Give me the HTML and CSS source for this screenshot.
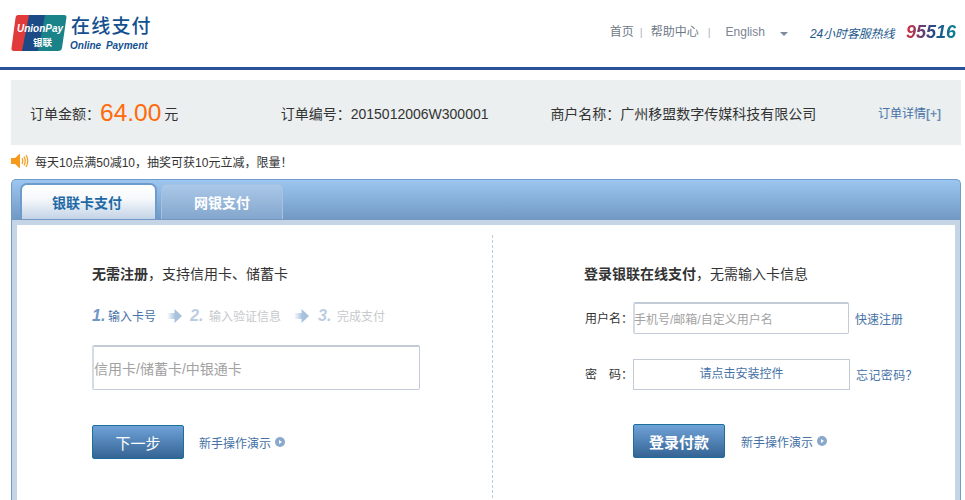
FILE: index.html
```html
<!DOCTYPE html>
<html lang="zh-CN">
<head>
<meta charset="utf-8">
<title>在线支付</title>
<link rel="stylesheet" href="styles.css">
</head>
<body>
<header class="top">
  <div class="brand">
    <svg class="logo" width="56" height="36" viewBox="0 0 56 36">
      <path d="M7 0H22L15 36H3Q0 36 .5 33L4.500 3Q5 0 7 0Z" fill="#e03a3a"/>
      <path d="M18 0H37L30 36H11Z" fill="#1c4a86"/>
      <path d="M34 0H53Q56 0 55.400 3L51 33Q50.500 36 47 36H27Z" fill="#1a8289"/>
      <text x="6" y="17" class="logo-en" textLength="46" lengthAdjust="spacingAndGlyphs">UnionPay</text>
      <text x="22" y="30.500" class="logo-cn">银联</text>
    </svg>
    <div class="brand-text">
      <div class="brand-cn">在线支付</div>
      <div class="brand-en">Online Payment</div>
    </div>
  </div>
  <nav class="nav">
    <a class="nav-link">首页</a><i class="sep sep-a">|</i><a class="nav-link">帮助中心</a><i class="sep sep-b">|</i>
    <a class="nav-lang">English</a><span class="caret"></span>
    <span class="hotline">24小时客服热线</span><span class="phone">95516</span>
  </nav>
</header>

<section class="order">
  <div class="order-amount">订单金额：<b class="amount">64.00</b> 元</div>
  <div class="order-no">订单编号：2015012006W300001</div>
  <div class="order-shop">商户名称：广州移盟数字传媒科技有限公司</div>
  <a class="order-more">订单详情<b>[+]</b></a>
</section>

<p class="notice">
  <svg class="speaker" width="19" height="16" viewBox="0 0 19 16">
    <path d="M0 5H4L9 .5V15.500L4 11H0Z" fill="#f79a1c"/>
    <path d="M11 5Q12.500 8 11 11M13 3.500Q15.500 8 13 12.500M15 2Q18.500 8 15 14" fill="none" stroke="#f2a02a" stroke-width="1.300"/>
  </svg>
  <span>每天10点满50减10，抽奖可获10元立减，限量！</span>
</p>

<main class="panel">
  <div class="tabs">
    <div class="tab tab-on">银联卡支付</div>
    <div class="tab tab-off">网银支付</div>
  </div>
  <div class="frame">
    <div class="cols">
      <section class="col col-left">
        <h2 class="col-title"><b>无需注册</b>，支持信用卡、储蓄卡</h2>
        <ol class="steps">
          <li class="step step-on"><em>1.</em>输入卡号</li>
          <li class="arrow arrow-a"></li>
          <li class="step"><em>2.</em>输入验证信息</li>
          <li class="arrow arrow-b"></li>
          <li class="step"><em>3.</em>完成支付</li>
        </ol>
        <div class="field field-card">信用卡/储蓄卡/中银通卡</div>
        <div class="actions actions-left">
          <button class="btn">下一步</button>
          <a class="demo">新手操作演示<span class="play"></span></a>
        </div>
      </section>
      <section class="col col-right">
        <h2 class="col-title"><b>登录银联在线支付</b>，无需输入卡信息</h2>
        <div class="row row-user">
          <label class="row-label">用户名：</label>
          <div class="field field-user">手机号/邮箱/自定义用户名</div>
          <a class="row-link">快速注册</a>
        </div>
        <div class="row row-pass">
          <label class="row-label">密&emsp;码：</label>
          <div class="field-install">请点击安装控件</div>
          <a class="row-link row-link-wide">忘记密码？</a>
        </div>
        <div class="actions actions-right">
          <button class="btn btn-bold">登录付款</button>
          <a class="demo">新手操作演示<span class="play"></span></a>
        </div>
      </section>
    </div>
  </div>
</main>
</body>
</html>
```
FILE: styles.css
```css
* { box-sizing: border-box; }
html, body { margin: 0; height: 500px; overflow: hidden; background: #fff; }
body {
  font-family: "Liberation Sans", "Noto Sans CJK SC", sans-serif;
  font-size: 12px;
  color: #333;
}
a { color: #4672a6; text-decoration: none; }

.top {
  height: 70px;
  border-bottom: 3px solid #2a5298;
  padding: 15px 9px 0 11px;
  display: flex;
  justify-content: space-between;
  align-items: flex-start;
}
.brand { display: flex; gap: 3px; }
.logo { display: block; }
.logo-en { font: italic bold 10px "Liberation Sans", sans-serif; fill: #fff; }
.logo-cn { font: bold 9.500px "Noto Sans CJK SC", sans-serif; fill: #fff; }
.brand-cn {
  font-size: 19px;
  font-weight: 500;
  line-height: 22px;
  letter-spacing: 1.200px;
  color: #14508f;
  margin: 1px 0 0 1px;
}
.brand-en {
  font: italic bold 10px/12px "Liberation Sans", sans-serif;
  word-spacing: 2px;
  color: #14508f;
  margin-top: 2px;
}
.nav {
  display: flex;
  align-items: center;
  height: 30px;
  margin-top: 2px;
  color: #6f7a87;
}
.nav-link { color: #6f7a87; line-height: 30px; }
.sep { font-style: normal; color: #a9b3bf; font-size: 11px; }
.sep-a { margin: 0 8px 0 6px; }
.sep-b { margin: 0 15px 0 9px; }
.nav-lang { color: #7a8494; }
.caret {
  width: 0;
  height: 0;
  margin: 3px 22px 0 15px;
  border: 4px solid transparent;
  border-top-color: #7f8a99;
  border-bottom: 0;
}
.hotline { font-style: italic; color: #1d5a8c; width: 96px; letter-spacing: -.1px; }
.phone {
  font: italic bold 18px/30px "Liberation Sans", sans-serif;
  background: linear-gradient(90deg, #dc2f3f 0, #6c3b70 30%, #1c4f8a 60%, #0f8293 100%);
  -webkit-background-clip: text;
  background-clip: text;
  color: transparent;
}

.order {
  margin: 10px 4px 0 11px;
  height: 65px;
  background: #ebeff0;
  padding: 0 20px 0 19px;
  display: flex;
  align-items: center;
  font-size: 14px;
  color: #333;
}
.order-amount { width: 251px; display: flex; align-items: center; white-space: pre; }
.amount { font-weight: normal; font-size: 24.500px; color: #ff6a0a; line-height: 30px; margin-right: -1px; }
.order-no { width: 270px; }
.order-shop { width: 328px; }
.order-more { font-size: 12px; white-space: nowrap; }
.order-more b { color: #6f8fb5; font-size: 12px; }

.notice {
  margin: 8px 0 0 11px;
  height: 16px;
  display: flex;
  align-items: center;
  gap: 5px;
  color: #333;
}
.speaker { display: block; }

.panel {
  margin: 10px 4px 0 11px;
  height: 338px;
  background: linear-gradient(#9cc6f0 0, #7098c3 40px, #c5d5e6 40px);
  border: 1px solid #6f9ccb;
  border-bottom: 0;
  border-radius: 5px 5px 0 0;
  padding: 0 5px;
}
.tabs {
  height: 39px;
  display: flex;
  align-items: flex-end;
  gap: 6px;
  padding-left: 5px;
}
.tab {
  height: 35px;
  text-align: center;
  font-size: 14px;
  font-weight: bold;
  line-height: 36px;
  border-radius: 5px 5px 0 0;
}
.tab-on {
  width: 133px;
  height: 34px;
  padding-right: 3px;
  background: linear-gradient(#fff 0, #f7f9fc 40%, #c3d3e6 100%);
  color: #1f6aa5;
  box-shadow: 0 0 0 2px #6d9bcb;
  clip-path: inset(-2px -2px 0 -2px);
}
.tab-off {
  width: 122px;
  background: linear-gradient(#aac8e8, #84a6cd);
  border: 1px solid #a3c1e2;
  border-bottom: 0;
  color: #fff;
}
.frame { margin-top: 6px; height: 298px; background: #fff; padding-top: 10px; }
.cols { display: flex; height: 100%; }
.col { height: 100%; }
.col-left {
  width: 476px;
  padding-left: 75px;
  border-right: 1px dashed #b7cde2;
}
.col-right { flex: 1; padding-left: 91px; }
.col-title {
  margin: 0;
  padding-top: 30px;
  font-size: 14px;
  font-weight: normal;
  line-height: 18px;
  color: #333;
}
.col-title b { font-weight: bold; }

.steps {
  margin: 24px 0 0;
  padding: 0;
  list-style: none;
  display: flex;
  align-items: center;
  height: 18px;
  color: #c6c9cd;
}
.step { display: flex; align-items: baseline; }
.step em {
  width: 19px;
  font: italic bold 16px "Liberation Sans", sans-serif;
  color: #bccde2;
}
.step-on { color: #4672a6; }
.step-on em { width: 16px; color: #6e97c4; }
.arrow {
  width: 15px;
  height: 14px;
  background: linear-gradient(90deg, #fff, #a8c2de 55%);
  clip-path: polygon(0 28%, 50% 28%, 50% 0, 100% 50%, 50% 100%, 50% 72%, 0 72%);
}
.arrow-a { margin: 0 8px 0 11px; }
.arrow-b { margin: 0 9px 0 13px; }

.field {
  border: 1px solid #c3ccd6;
  border-top: 2px solid #c3ccd6;
  border-left: 2px solid #d5dbe2;
  border-radius: 2px;
  color: #a2a2a2;
  background: #fff;
  display: flex;
  align-items: center;
}
.field-card { margin-top: 20px; width: 328px; height: 45px; font-size: 14px; }
.field-user { width: 216px; height: 32px; text-indent: -1px; }
.field-install {
  width: 217px;
  height: 31px;
  border: 1px solid #c3ccd6;
  color: #4672a6;
  line-height: 29px;
  text-align: center;
}

.actions { display: flex; align-items: center; }
.actions-left { margin-top: 35px; }
.actions-right { margin-top: 34px; margin-left: 49px; }
.actions-right .demo { margin-left: 16px; }
.btn {
  width: 92px;
  height: 34px;
  padding: 0;
  border: 1px solid #1b6f9b;
  border-radius: 2px;
  background: linear-gradient(#6fa2d8, #356494);
  color: #fff;
  font: 15px "Noto Sans CJK SC", sans-serif;
}
.btn-bold { font-weight: bold; }
.demo { margin-left: 15px; display: flex; align-items: center; gap: 4px; }
.play {
  width: 10px;
  height: 10px;
  border-radius: 50%;
  background: #8aa8cc;
  position: relative;
}
.play::after {
  content: "";
  position: absolute;
  left: 4px;
  top: 2.500px;
  border-left: 3px solid #fff;
  border-top: 2.500px solid transparent;
  border-bottom: 2.500px solid transparent;
}

.row { display: flex; align-items: center; }
.row-user { margin-top: 19px; }
.row-pass { margin-top: 25px; }
.row-label { width: 49px; padding: 0 0 2px 1px; color: #333; white-space: nowrap; }
.row-link { margin-left: 6px; white-space: nowrap; }
.row-link-wide { letter-spacing: .4px; }
```
